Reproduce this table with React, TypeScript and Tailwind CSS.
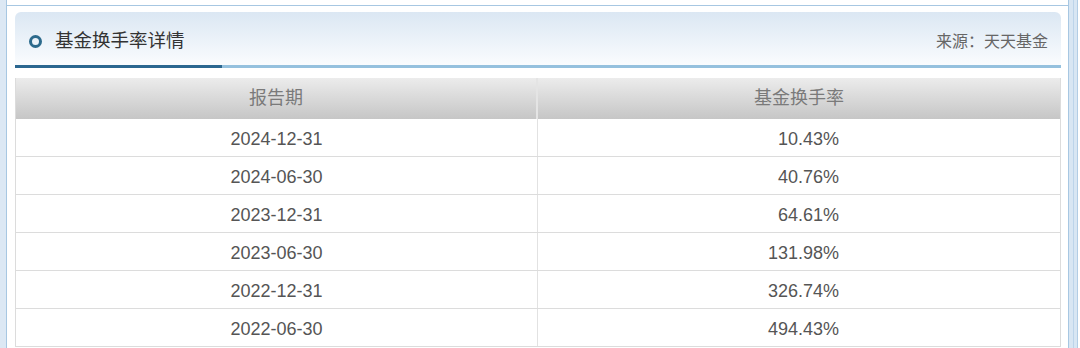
const rows = [
  { date: "2024-12-31", rate: "10.43%" },
  { date: "2024-06-30", rate: "40.76%" },
  { date: "2023-12-31", rate: "64.61%" },
  { date: "2023-06-30", rate: "131.98%" },
  { date: "2022-12-31", rate: "326.74%" },
  { date: "2022-06-30", rate: "494.43%" },
];

const cjk = "font-['Liberation_Serif','Noto_Sans_CJK_SC',serif]";
const num = "font-['Liberation_Sans','Noto_Sans_CJK_SC',sans-serif]";

export default function App() {
  return (
    <div className="flex h-[348px] w-[1080px] overflow-hidden bg-white">
      <div className="w-[6px] shrink-0 bg-[#dce8f4]" />
      <div className="w-[1063px] shrink-0 border-x border-[#a7c7e2]">
        <div className="h-[5px]" />
        <div className="border-t border-[#a7c7e2] pl-[8px] pr-[7px] pt-[6px]">
          {/* panel head */}
          <div className="flex h-[53px] items-center justify-between rounded-t-[6px] bg-gradient-to-b from-[#dbe7f3] to-[#fafcfe] pl-[14px] pr-[13px] pt-[6px]">
            <div className="flex items-center">
              <span className="block h-[13px] w-[13px] shrink-0 rounded-full border-[3px] border-[#2c6a8c]" />
              <span className={`ml-[13px] text-[18.5px] text-[#333] ${cjk}`}>基金换手率详情</span>
            </div>
            <span className={`text-[16px] text-[#666] ${cjk}`}>来源：天天基金</span>
          </div>
          <div className="flex h-[3px]">
            <div className="w-[207px] bg-[#2b6790]" />
            <div className="flex-1 bg-[#95c1de]" />
          </div>

          {/* table */}
          <div className="mt-[10px] border-x border-[#dcdcdc]">
            <div className="grid h-[41px] grid-cols-[522px_1fr] bg-gradient-to-b from-[#ececec] to-[#c6c6c6]">
              <div className={`flex items-center justify-center border-r-2 border-[#e4e4e4] text-[18px] text-[#7a7a7a] ${cjk}`}>
                报告期
              </div>
              <div className={`flex items-center justify-center text-[18px] text-[#7a7a7a] ${cjk}`}>
                基金换手率
              </div>
            </div>
            {rows.map((r) => (
              <div
                key={r.date}
                className={`grid h-[38px] grid-cols-[522px_1fr] border-b border-[#dcdcdc] text-[18px] text-[#555] ${num}`}
              >
                <div className="flex items-center justify-center border-r border-[#e2e2e2] pt-[3px]">
                  {r.date}
                </div>
                <div className="flex items-center justify-center pt-[3px]">
                  <span className="w-[80px] text-right">{r.rate}</span>
                </div>
              </div>
            ))}
          </div>
        </div>
      </div>
      <div className="flex w-[11px] shrink-0">
        <div className="w-[4px] bg-[#d8e6f3]" />
        <div className="w-[1px] bg-[#bcd4ea]" />
        <div className="w-[3px] bg-[#d8e6f3]" />
        <div className="w-[1px] bg-[#b2cde5]" />
      </div>
    </div>
  );
}
